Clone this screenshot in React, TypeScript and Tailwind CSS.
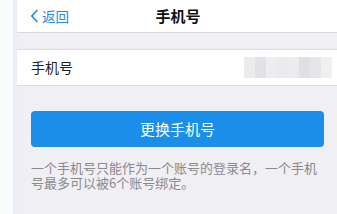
import React from 'react'

const font = { fontFamily: '"Noto Sans CJK SC", "Noto Sans", sans-serif' }

function BlurredNumber() {
  // masked phone number, drawn as soft gray blocks
  const shades = ['#ececef', '#e2e2e6', '#ededf0', '#ebebee', '#ececef', '#e0e0e4', '#e6e6ea', '#f0f0f3']
  return (
    <div className="flex h-[21px] items-stretch blur-[0.6px]">
      {shades.map((c, i) => (
        <div key={i} className="w-[11px]" style={{ backgroundColor: c }} />
      ))}
    </div>
  )
}

export default function App() {
  return (
    <div className="flex h-[214px] w-[337px] overflow-hidden bg-[#fafbfd]" style={font}>
      <div className="w-[13px] shrink-0 bg-[#fafbfd]" />
      <div className="w-[4px] shrink-0 bg-[#e9eef8]" />
      <div className="flex flex-1 flex-col bg-[#efeff4]">
        {/* Nav bar */}
        <div className="relative flex h-[33px] items-center border-b border-[#d8d8dc] bg-white">
          <div className="flex items-center pl-[13px] text-[13.5px] text-[#1a8ee8]">
            <svg width="9" height="14" viewBox="0 0 9 14" className="mr-[3px]">
              <path d="M7.5 1 L1.8 7 L7.5 13" fill="none" stroke="#1a8ee8" strokeWidth="1.6" />
            </svg>
            <span>返回</span>
          </div>
          <div className="absolute left-0 right-0 top-0 flex h-full items-center justify-center pointer-events-none">
            <span className="text-[15px] font-semibold text-[#111]">手机号</span>
          </div>
        </div>

        {/* Phone row */}
        <div className="mt-[16px] flex h-[37px] items-center justify-between border-y border-[#dcdce0] bg-white pl-[14px] pr-[7px]">
          <span className="text-[14px] text-[#222]">手机号</span>
          <BlurredNumber />
        </div>

        {/* Button */}
        <div className="px-[14px] pt-[25px]">
          <button className="flex h-[36px] w-[293px] items-center justify-center rounded-[4px] bg-[#1a8ee8] text-[15px] text-white">
            更换手机号
          </button>
          <p className="mt-[13px] w-[294px] text-[13px] leading-[15px] text-[#8a8a8e]">
            一个手机号只能作为一个账号的登录名，一个手机号最多可以被6个账号绑定。
          </p>
        </div>
      </div>
    </div>
  )
}
